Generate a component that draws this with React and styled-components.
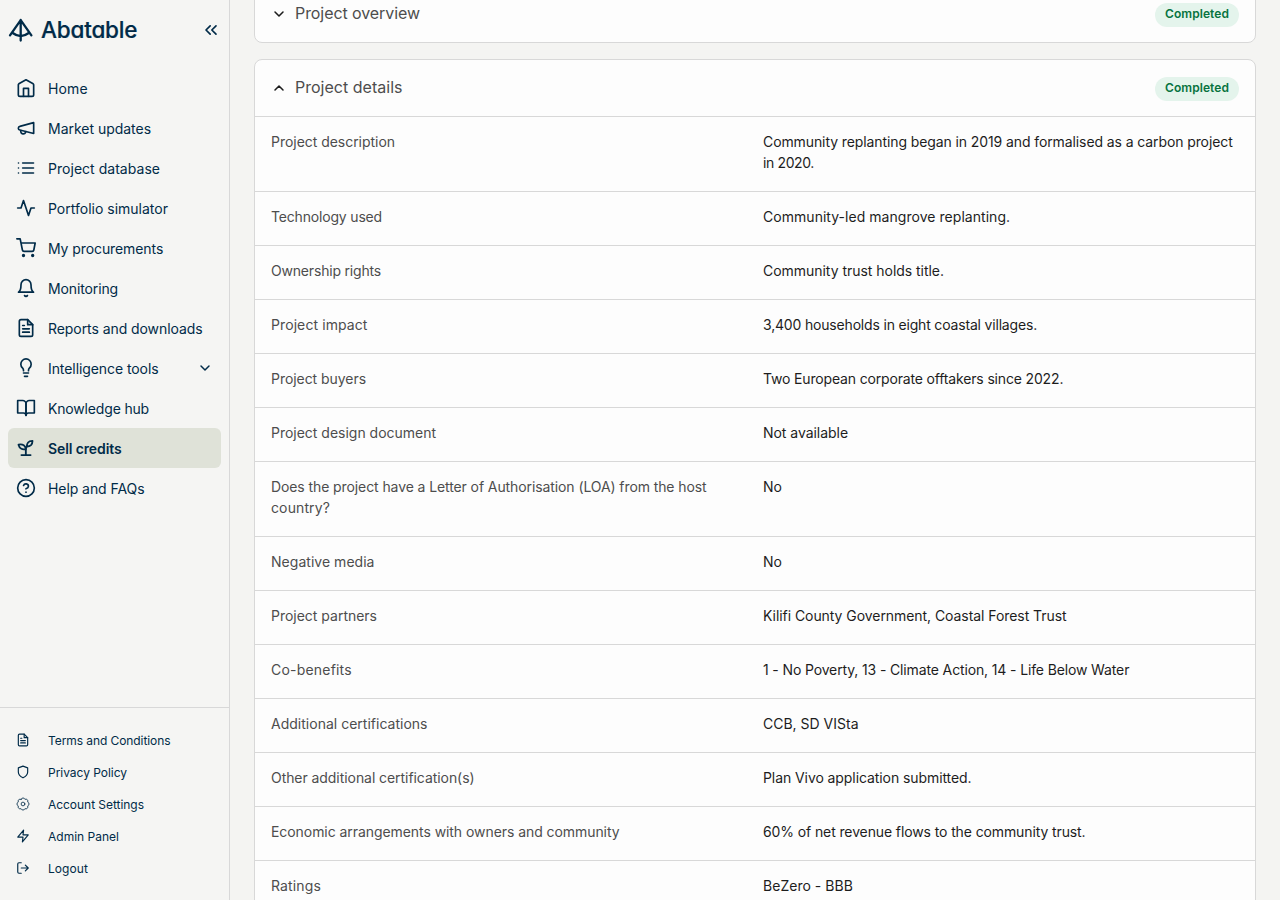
import React from "react";
import styled, { createGlobalStyle, css } from "styled-components";

const navy = "#012b48";
const line = "#d8d8d8";

const GlobalStyle = createGlobalStyle`
  *, *::before, *::after { box-sizing: border-box; }
  body {
    margin: 0;
    background: #f4f4f2;
    font-family: Inter, "Liberation Sans", sans-serif;
    overflow: hidden;
  }
`;

const Shell = styled.div`
  display: grid;
  grid-template-columns: 230px 1fr;
  grid-template-rows: 900px;
  height: 900px;
  overflow: hidden;
`;

const Sidebar = styled.aside`
  display: flex;
  flex-direction: column;
  background: #f5f5f3;
  border-right: 1px solid ${line};
  color: ${navy};
`;

const Brand = styled.div`
  display: flex;
  align-items: center;
  height: 60px;
  padding: 0 8px;
`;

const Wordmark = styled.span`
  flex: 1;
  margin-left: 7px;
  font-size: 22.5px;
  font-weight: 500;
  line-height: 28px;
  letter-spacing: -0.2px;
  font-feature-settings: "cv11";
  -webkit-text-stroke: 0.2px ${navy};
`;

const Nav = styled.nav`
  display: flex;
  flex-direction: column;
  flex: 1;
  padding: 8px;
`;

const NavItem = styled.a`
  display: flex;
  align-items: center;
  gap: 12px;
  height: 40px;
  padding: 0 8px;
  border-radius: 6px;
  font-size: 14px;
  line-height: 20px;
  ${(p) =>
    p.$active &&
    css`
      background: #dfe2d8;
      font-weight: 600;
    `}
`;

const NavLabel = styled.span`
  flex: 1;
  padding-top: 2px;
  white-space: nowrap;
  letter-spacing: ${(p) => p.$track || 0}px;
`;

const Footer = styled.div`
  display: flex;
  flex-direction: column;
  padding: 16px;
  border-top: 1px solid ${line};
`;

const FooterItem = styled.a`
  display: flex;
  align-items: center;
  gap: 18px;
  height: 32px;
  font-size: 12px;
  line-height: 18px;
`;

const IconSvg = styled.svg`
  display: block;
  flex: none;
  fill: none;
  stroke: currentColor;
  stroke-linecap: round;
  stroke-linejoin: round;
`;

const Main = styled.main`
  display: flex;
  flex-direction: column;
  gap: 16px;
  margin-top: -15px;
  padding: 0 24px;
`;

const Card = styled.section`
  flex: none;
  border: 1px solid ${line};
  border-radius: 8px;
  background: #fdfdfd;
`;

const CardHeader = styled.header`
  display: flex;
  align-items: center;
  gap: 8px;
  height: 56px;
  padding: 0 16px;
  color: #1c1c1c;
`;

const CardTitle = styled.h2`
  flex: 1;
  margin: 0;
  padding-bottom: 2px;
  color: #4d4d4d;
  font-size: 16px;
  font-weight: 400;
  line-height: 24px;
  letter-spacing: ${(p) => p.$track}px;
`;

const Badge = styled.span`
  height: 24px;
  margin-top: 2px;
  padding: 0 10px;
  border-radius: 12px;
  background: #e4f4ec;
  color: #07733f;
  font-size: 12px;
  font-weight: 600;
  line-height: 22px;
  letter-spacing: 0.06px;
`;

const Row = styled.div`
  display: grid;
  grid-template-columns: 1fr 1fr;
  gap: 16px;
  padding: 14px 16px 18px;
  border-top: 1px solid ${line};
  font-size: 14px;
  line-height: 21px;
`;

const Cell = styled.div`
  color: ${(p) => (p.$label ? "#4d4d4d" : "#1d1d1d")};
`;

const Phrase = styled.span`
  display: ${(p) => (p.$block ? "block" : "inline")};
  white-space: nowrap;
  letter-spacing: ${(p) => p.$track}px;
`;

const icons = {
  home: (
    <>
      <path d="M2.8 8.2Q2.8 7.500 3.400 7L12 2.200 20.600 7q.6.5.6 1.200V20q0 2-2 2H4.800q-2 0-2-2Z" />
      <path d="M9 22V12.400h6V22" />
    </>
  ),
  megaphone: (
    <>
      <path d="M21.200 5.600v13L4.600 14.400Q2.800 14 2.800 12.200T4.600 10Z" />
      <path d="M5.800 15c-.5 2.200.6 3.700 2.400 4 1.900.2 3.200-.9 3.600-2.600" />
    </>
  ),
  list: <path d="M8 6h13M8 12h13M8 18h13M3 6h.01M3 12h.01M3 18h.01" />,
  activity: <path d="M22 12h-4l-3 9L9 3l-3 9H2" />,
  cart: (
    <>
      <circle cx="9" cy="21" r="1" />
      <circle cx="20" cy="21" r="1" />
      <path d="M1 1h4l2.680 13.390a2 2 0 0 0 2 1.610h9.720a2 2 0 0 0 2-1.610L23 6H6" />
    </>
  ),
  bell: (
    <>
      <path d="M18 8A6 6 0 0 0 6 8c0 7-3 9-3 9h18s-3-2-3-9" />
      <path d="M13.730 21a2 2 0 0 1-3.460 0" />
    </>
  ),
  file: (
    <>
      <path d="M14 2H6a2 2 0 0 0-2 2v16a2 2 0 0 0 2 2h12a2 2 0 0 0 2-2V8z" />
      <path d="M14 2v6h6M16 13H8M16 17H8M10 9H8" />
    </>
  ),
  bulb: (
    <>
      <path d="M9 15.200v-.6c0-1.100-.4-1.700-1.300-2.800A6.200 6.200 0 1 1 16.300 11.800c-.9 1.100-1.300 1.700-1.300 2.800v.6" />
      <path d="M9 18h6M10.200 22h3.600" />
    </>
  ),
  book: (
    <>
      <path d="M2 3h6a4 4 0 0 1 4 4v14a3 3 0 0 0-3-3H2z" />
      <path d="M22 3h-6a4 4 0 0 0-4 4v14a3 3 0 0 1 3-3h7z" />
    </>
  ),
  sprout: (
    <>
      <path d="M6.500 20.500h11M11.800 20.500V14c0-2 .4-3.200 1.400-4.300" />
      <path d="M9.300 8.800c1.400.9 2.200 2.500 2.500 4.500-2.200.5-4 .4-5.400-.4-1.500-.8-2.700-2.300-3.400-4.900 2.800-.6 4.800-.2 6.300.8z" />
      <path d="M14.500 5.400c-1.100 1.300-1.600 2.900-1.500 4.900 2.200-.1 3.900-.7 5-1.700 1.100-1.100 1.700-2.700 1.800-5.100-2.700.1-4.300.7-5.300 1.900z" />
    </>
  ),
  help: (
    <>
      <circle cx="12" cy="12" r="10" />
      <path d="M9.090 9a3 3 0 0 1 5.830 1c0 2-3 3-3 3M12 17h.01" />
    </>
  ),
  shield: <path d="M12 22s8-4 8-10V5l-8-3-8 3v7c0 6 8 10 8 10z" />,
  gear: (
    <>
      <circle cx="12" cy="12" r="3.2" />
      <path d="M8.700 4a3.500 3.500 0 0 1 6.600 0a3.500 3.500 0 0 1 4.700 4.700a3.500 3.500 0 0 1 0 6.600a3.500 3.500 0 0 1-4.700 4.700a3.500 3.500 0 0 1-6.600 0a3.500 3.500 0 0 1-4.700-4.700a3.500 3.500 0 0 1 0-6.600a3.500 3.500 0 0 1 4.700-4.700z" />
    </>
  ),
  zap: <path d="M13 2 3 14h9l-1 8 10-12h-9z" />,
  logout: <path d="M9 21H5a2 2 0 0 1-2-2V5a2 2 0 0 1 2-2h4M16 17l5-5-5-5M21 12H9" />,
  chevronsLeft: <path d="m11 17-5-5 5-5M18 17l-5-5 5-5" />,
  chevronDown: <path d="m6 9 6 6 6-6" />,
  chevronUp: <path d="m6 15 6-6 6 6" />,
};

function Icon({ name, size = 20, weight = 2 }) {
  return (
    <IconSvg width={size} height={size} viewBox="0 0 24 24" strokeWidth={weight}>
      {icons[name]}
    </IconSvg>
  );
}

function Logo() {
  return (
    <IconSvg width="26" height="24" viewBox="0 0 26 24" strokeWidth="2.3">
      <path d="M12.700 2v20.500M2 17.400 12.700 2.200 23.400 17.400M4.200 14.800Q8 17.600 12.700 18.200 17.400 17.600 21.200 14.800" />
    </IconSvg>
  );
}

const navItems = [
  { icon: "home", label: "Home", track: 0.15 },
  { icon: "megaphone", label: "Market updates", track: -0.02 },
  { icon: "list", label: "Project database", track: 0.03 },
  { icon: "activity", label: "Portfolio simulator" },
  { icon: "cart", label: "My procurements", track: -0.09 },
  { icon: "bell", label: "Monitoring", track: -0.12 },
  { icon: "file", label: "Reports and downloads", track: -0.07 },
  { icon: "bulb", label: "Intelligence tools", track: -0.08, expandable: true },
  { icon: "book", label: "Knowledge hub", track: -0.17 },
  { icon: "sprout", label: "Sell credits", track: -0.11, active: true, weight: 2.2 },
  { icon: "help", label: "Help and FAQs", track: -0.07 },
];

const footerItems = [
  { icon: "file", label: "Terms and Conditions", track: -0.077 },
  { icon: "shield", label: "Privacy Policy", track: -0.03 },
  { icon: "gear", label: "Account Settings", track: -0.04, weight: 1.4 },
  { icon: "zap", label: "Admin Panel", track: 0 },
  { icon: "logout", label: "Logout", track: 0.07 },
];

/* Each entry: label lines, value lines; a line is [text, tracking]. */
const details = [
  [
    [["Project description", -0.034]],
    [
      ["Community replanting began in 2019 and formalised as a carbon project", -0.1],
      ["in 2020.", -0.377],
    ],
  ],
  [[["Technology used", -0.175]], [["Community-led mangrove replanting.", 0.04]]],
  [[["Ownership rights", -0.188]], [["Community trust holds title.", -0.032]]],
  [[["Project impact", 0.09]], [["3,400 households in eight coastal villages.", -0.179]]],
  [[["Project buyers", -0.051]], [["Two European corporate offtakers since 2022.", -0.16]]],
  [[["Project design document", -0.012]], [["Not available", -0.042]]],
  [
    [
      ["Does the project have a Letter of Authorisation (LOA) from the host", -0.096],
      ["country?", 0.12],
    ],
    [["No", 0.03]],
  ],
  [[["Negative media", 0.031]], [["No", 0.03]]],
  [[["Project partners", -0.011]], [["Kilifi County Government, Coastal Forest Trust", -0.06]]],
  [
    [["Co-benefits", 0.2]],
    [["1 - No Poverty, 13 - Climate Action, 14 - Life Below Water", -0.135]],
  ],
  [[["Additional certifications", 0.011]], [["CCB, SD VISta", 0]]],
  [[["Other additional certification(s)", -0.063]], [["Plan Vivo application submitted.", -0.081]]],
  [
    [["Economic arrangements with owners and community", -0.064]],
    [["60% of net revenue flows to the community trust.", -0.112]],
  ],
  [[["Ratings", 0.14]], [["BeZero - BBB", 0.03]]],
];

function Lines({ lines }) {
  return lines.map(([text, track]) => (
    <Phrase key={text} $track={track} $block={lines.length > 1}>
      {text}
    </Phrase>
  ));
}

export default function App() {
  return (
    <Shell>
      <GlobalStyle />
      <Sidebar>
        <Brand>
          <Logo />
          <Wordmark>Abatable</Wordmark>
          <Icon name="chevronsLeft" />
        </Brand>
        <Nav>
          {navItems.map((item) => (
            <NavItem key={item.label} $active={item.active}>
              <Icon name={item.icon} weight={item.weight} />
              <NavLabel $track={item.track}>{item.label}</NavLabel>
              {item.expandable && <Icon name="chevronDown" size={16} weight={2.2} />}
            </NavItem>
          ))}
        </Nav>
        <Footer>
          {footerItems.map((item) => (
            <FooterItem key={item.label}>
              <Icon name={item.icon} size={14} weight={item.weight} />
              <NavLabel $track={item.track}>{item.label}</NavLabel>
            </FooterItem>
          ))}
        </Footer>
      </Sidebar>
      <Main>
        <Card>
          <CardHeader>
            <Icon name="chevronDown" size={16} weight={2.3} />
            <CardTitle $track={-0.076}>Project overview</CardTitle>
            <Badge>Completed</Badge>
          </CardHeader>
        </Card>
        <Card>
          <CardHeader>
            <Icon name="chevronUp" size={16} weight={2.3} />
            <CardTitle $track={0.016}>Project details</CardTitle>
            <Badge>Completed</Badge>
          </CardHeader>
          {details.map(([label, value]) => (
            <Row key={label[0][0]}>
              <Cell $label>
                <Lines lines={label} />
              </Cell>
              <Cell>
                <Lines lines={value} />
              </Cell>
            </Row>
          ))}
        </Card>
      </Main>
    </Shell>
  );
}
